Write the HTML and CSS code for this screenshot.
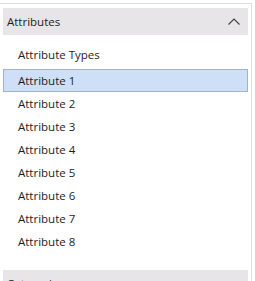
FILE: index.html
```html
<!DOCTYPE html>
<html lang="en">
<head>
    <meta charset="UTF-8">
    <meta name="viewport" content="width=device-width, initial-scale=1.0">
    <title>Attributes</title>
    <link rel="stylesheet" href="styles.css">
</head>
<body>
    <div class="panel">
        <div class="section-header">
            <span>Attributes</span>
            <svg class="chevron" width="12" height="7" viewBox="0 0 12 7">
                <path d="M0.5 6.5 L6 1 L11.5 6.5" fill="none" stroke="#444" stroke-width="1.2"/>
            </svg>
        </div>

        <div class="group-title">Attribute Types</div>

        <ul class="item-list">
            <li class="item selected">Attribute 1</li>
            <li class="item">Attribute 2</li>
            <li class="item">Attribute 3</li>
            <li class="item">Attribute 4</li>
            <li class="item">Attribute 5</li>
            <li class="item">Attribute 6</li>
            <li class="item">Attribute 7</li>
            <li class="item">Attribute 8</li>
        </ul>

        <div class="section-header next">
            <span>Categories</span>
        </div>
    </div>
</body>
</html>
```

FILE: styles.css
```css
body {
    margin: 0;
    background: white;
    font-family: 'Open Sans', 'Noto Sans', sans-serif;
    font-size: 11.5px;
    color: #1e1e1e;
    overflow: hidden;
}
.panel {
    margin-top: 3px;
    width: 251px;
    height: 277px;
    overflow: hidden;
    border-top: 1px solid #dedede;
    border-right: 1px solid #dedede;
}
.section-header {
    margin: 4px 3px 0 3px;
    height: 27px;
    background: #e7e5e7;
    display: flex;
    align-items: center;
    justify-content: space-between;
    padding: 0 8px 0 4px;
}
.chevron {
    margin-top: -1px;
}
.section-header.next {
    margin-top: 17px;
}
.group-title {
    margin-top: 8px;
    height: 23px;
    line-height: 23px;
    padding-left: 18px;
}
.item-list {
    list-style: none;
    margin: 3px 0 0 0;
    padding: 0;
}
.item {
    margin: 0 3px;
    height: 23px;
    line-height: 23px;
    padding-left: 15px;
    box-sizing: border-box;
}
.item.selected {
    background: #cde0f7;
    border: 1px solid #a3b3c6;
    line-height: 21px;
    padding-left: 14px;
}
```
